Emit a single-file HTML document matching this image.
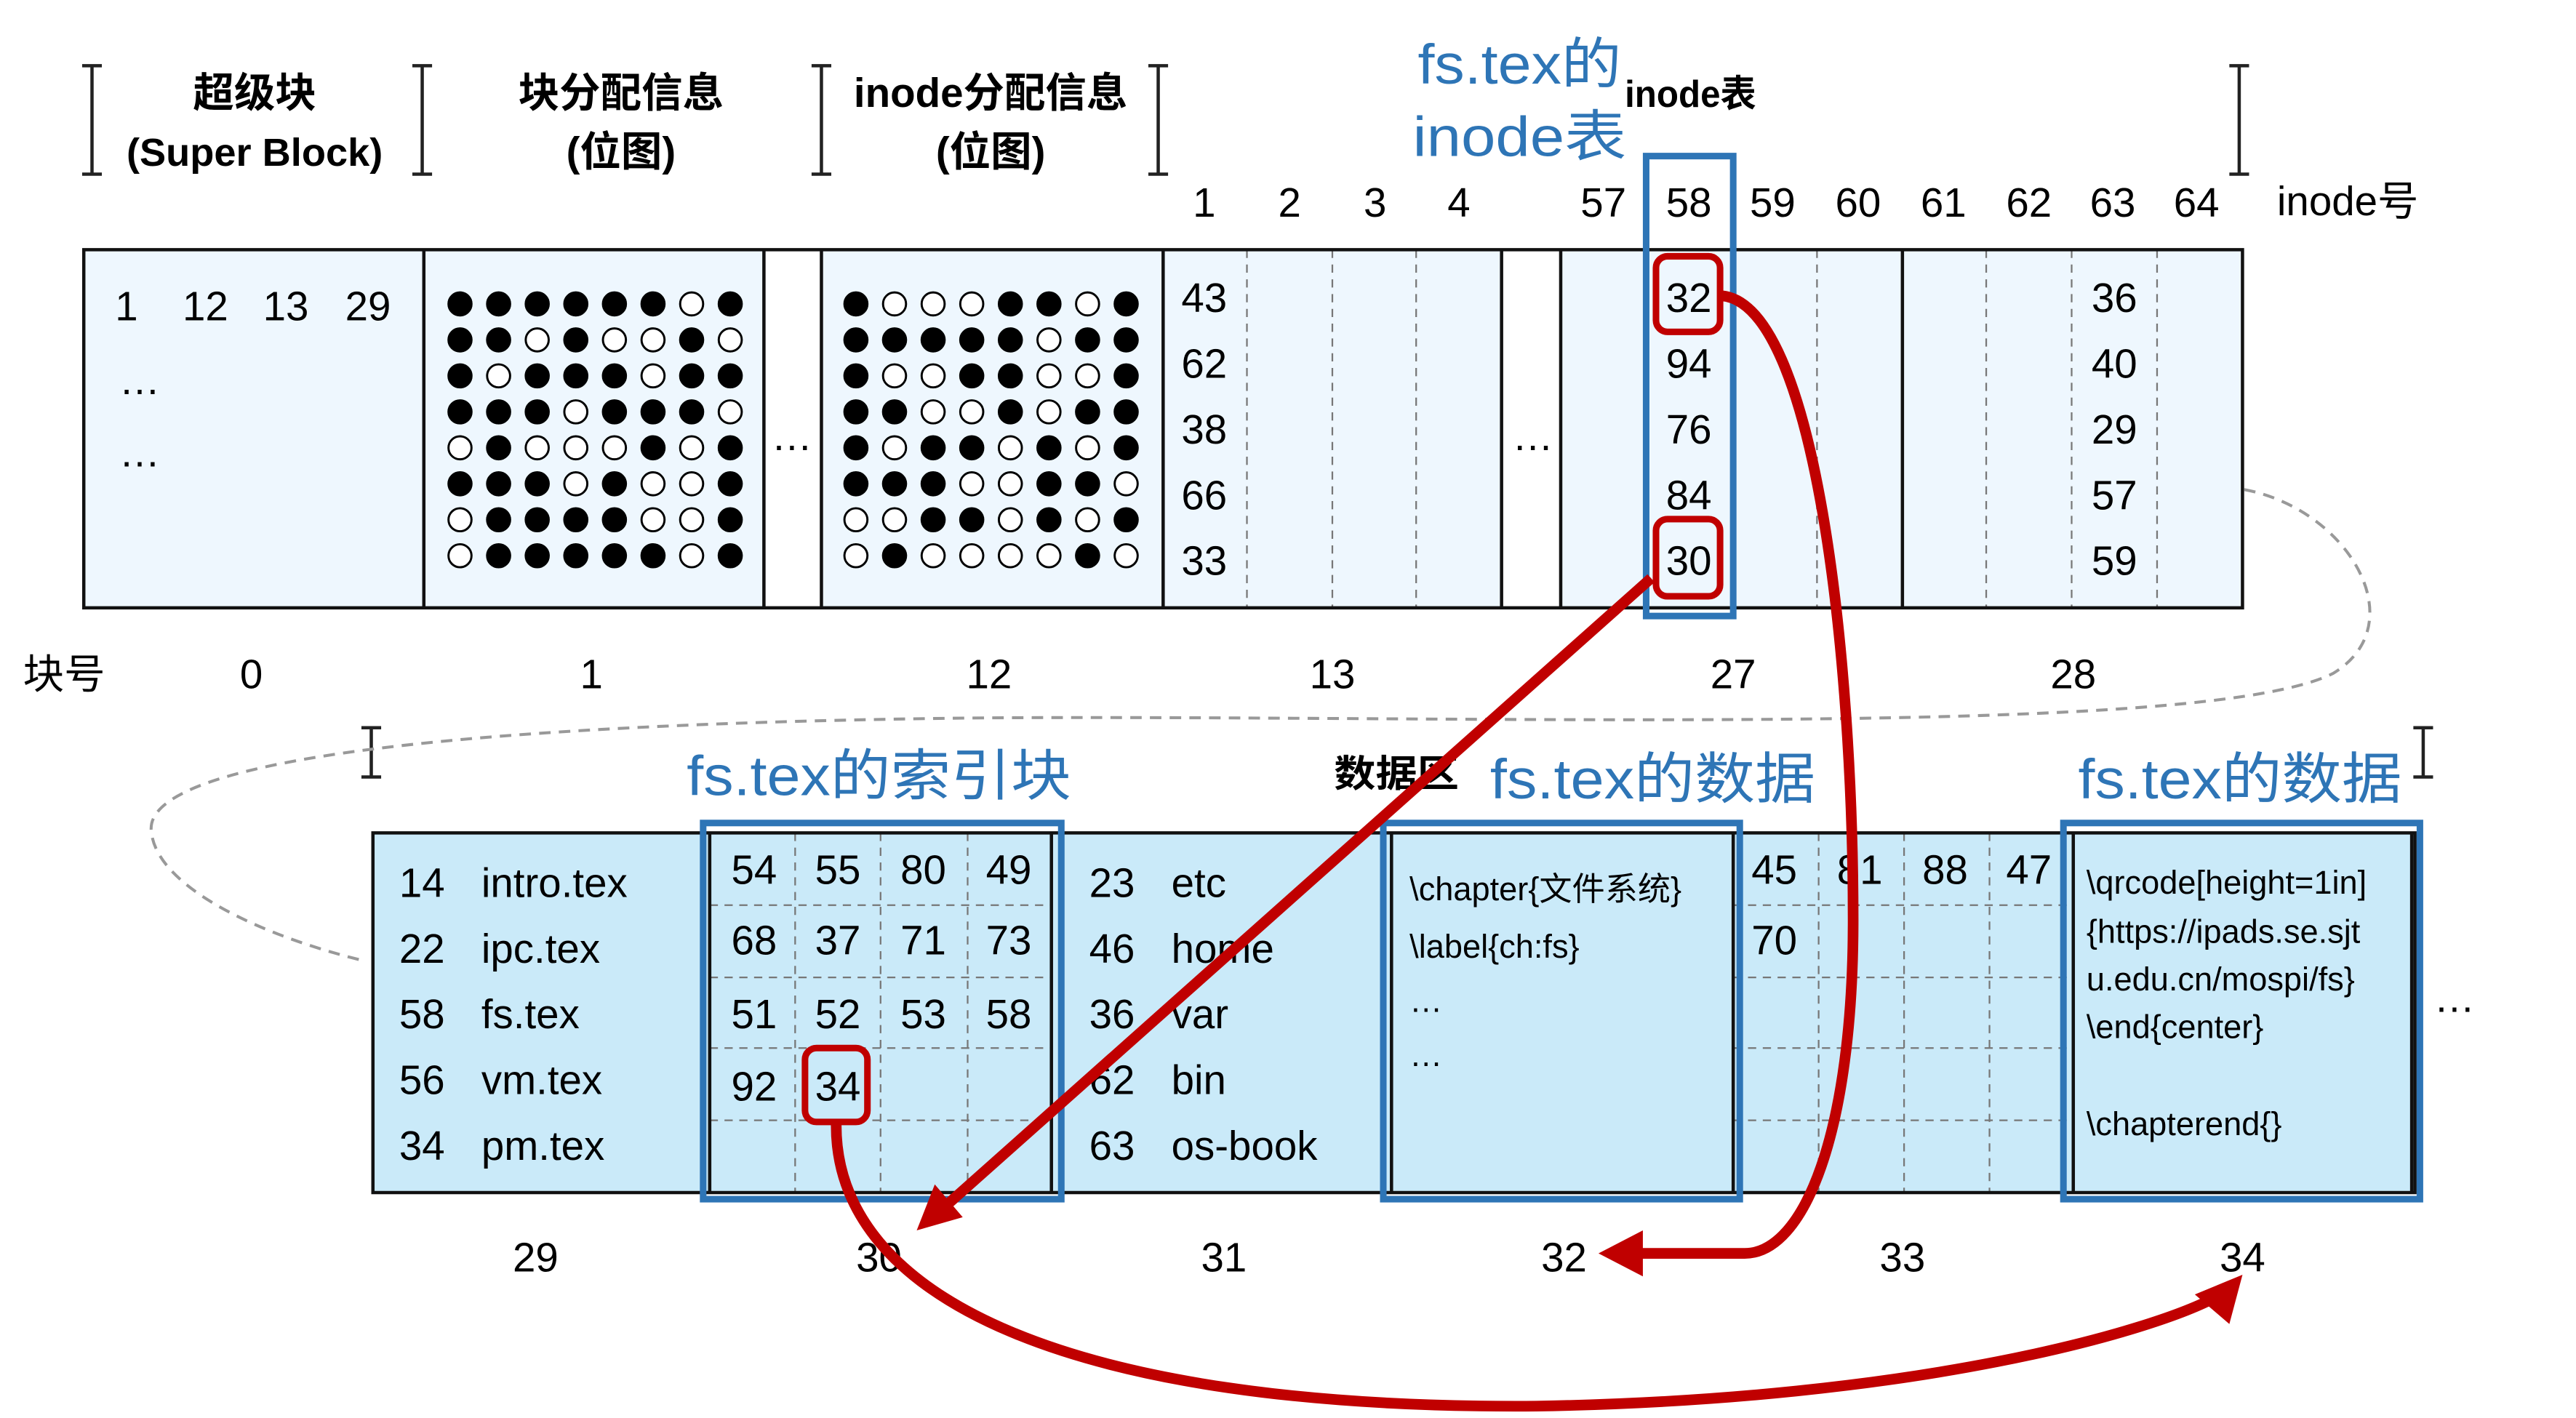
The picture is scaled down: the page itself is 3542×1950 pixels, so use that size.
<!DOCTYPE html>
<html><head><meta charset="utf-8"><style>html,body{margin:0;padding:0;background:#fff}svg{display:block}
text{font-family:"Liberation Sans","Noto Sans CJK SC",sans-serif;fill:#000}
.n{font-size:25px;text-anchor:middle}
.l{font-size:25px}
.b{font-weight:bold;font-size:25px;text-anchor:middle}
.bl{fill:#2e75b6;font-size:34px}
.s{font-size:20px}
</style></head><body>
<svg width="3542" height="1950" viewBox="0 0 1568 863.2" xmlns="http://www.w3.org/2000/svg">
<rect width="1568" height="864" fill="#fff"/>
<g stroke="#222" stroke-width="2" fill="none">
<path d="M50,40h12M56,40v66M50,106h12"/>
<path d="M251,40h12M257,40v66M251,106h12"/>
<path d="M494,40h12M500,40v66M494,106h12"/>
<path d="M699,40h12M705,40v66M699,106h12"/>
<path d="M1357,40h12M1363,40v66M1357,106h12"/>
<path d="M220,443h12M226,443v30M220,473h12"/>
<path d="M1469,443h12M1475,443v30M1469,473h12"/>
</g>
<text class="b" x="155" y="65">超级块</text>
<text class="n" x="155" y="101" style="font-weight:bold;font-size:24px">(Super Block)</text>
<text class="b" x="378" y="65">块分配信息</text>
<text class="b" x="378" y="101">(位图)</text>
<text class="b" x="603" y="65">inode分配信息</text>
<text class="b" x="603" y="101">(位图)</text>
<text class="bl" x="863" y="51" textLength="124" lengthAdjust="spacingAndGlyphs">fs.tex的</text>
<text class="bl" x="860" y="95" textLength="130" lengthAdjust="spacingAndGlyphs">inode表</text>
<text x="989" y="65" style="font-weight:bold;font-size:23px" textLength="80" lengthAdjust="spacingAndGlyphs">inode表</text>
<g>
<text class="n" x="733" y="132">1</text><text class="n" x="785" y="132">2</text><text class="n" x="837" y="132">3</text><text class="n" x="888" y="132">4</text>
<text class="n" x="976" y="132">57</text><text class="n" x="1028" y="132">58</text><text class="n" x="1079" y="132">59</text><text class="n" x="1131" y="132">60</text>
<text class="n" x="1183" y="132">61</text><text class="n" x="1235" y="132">62</text><text class="n" x="1286" y="132">63</text><text class="n" x="1337" y="132">64</text>
</g>
<text class="l" x="1386" y="131">inode号</text>
<rect x="51" y="152" width="1314" height="218" fill="#eef7fe"/>
<rect x="465" y="152" width="35" height="218" fill="#fff"/>
<rect x="914" y="152" width="36" height="218" fill="#fff"/>
<g stroke="#777" stroke-width="1" stroke-dasharray="5,4">
<path d="M759,152v218M811,152v218M862,152v218M1003,152v218M1106,152v218M1209,152v218M1261,152v218M1313,152v218"/>
</g>
<g stroke="#111" stroke-width="2" fill="none">
<path d="M51,152H1365V370H51Z"/>
<path d="M258,152v218M465,152v218M500,152v218M708,152v218M914,152v218M950,152v218M1158,152v218"/>
</g>
<text class="n" x="77" y="195">1</text><text class="n" x="125" y="195">12</text><text class="n" x="174" y="195">13</text><text class="n" x="224" y="195">29</text>
<text class="n" x="85" y="240">…</text><text class="n" x="85" y="284">…</text>
<text class="n" x="482" y="274">…</text><text class="n" x="933" y="274">…</text>
<g>
<text class="n" x="733" y="190">43</text><text class="n" x="733" y="230">62</text><text class="n" x="733" y="270">38</text><text class="n" x="733" y="310">66</text><text class="n" x="733" y="350">33</text>
<text class="n" x="1028" y="190">32</text><text class="n" x="1028" y="230">94</text><text class="n" x="1028" y="270">76</text><text class="n" x="1028" y="310">84</text><text class="n" x="1028" y="350">30</text>
<text class="n" x="1287" y="190">36</text><text class="n" x="1287" y="230">40</text><text class="n" x="1287" y="270">29</text><text class="n" x="1287" y="310">57</text><text class="n" x="1287" y="350">59</text>
</g>
<g stroke="#000" stroke-width="1.3">
<g transform="translate(280,185)">
<g fill="#000"><circle cx="0" r="7"/><circle cx="23.5" r="7"/><circle cx="47" r="7"/><circle cx="70.5" r="7"/><circle cx="94" r="7"/><circle cx="117.5" r="7"/><circle cx="141" r="7" fill="#fff"/><circle cx="164.5" r="7"/></g>
<g fill="#000" transform="translate(0,21.9)"><circle cx="0" r="7"/><circle cx="23.5" r="7"/><circle cx="47" r="7" fill="#fff"/><circle cx="70.5" r="7"/><circle cx="94" r="7" fill="#fff"/><circle cx="117.5" r="7" fill="#fff"/><circle cx="141" r="7"/><circle cx="164.5" r="7" fill="#fff"/></g>
<g fill="#000" transform="translate(0,43.8)"><circle cx="0" r="7"/><circle cx="23.5" r="7" fill="#fff"/><circle cx="47" r="7"/><circle cx="70.5" r="7"/><circle cx="94" r="7"/><circle cx="117.5" r="7" fill="#fff"/><circle cx="141" r="7"/><circle cx="164.5" r="7"/></g>
<g fill="#000" transform="translate(0,65.7)"><circle cx="0" r="7"/><circle cx="23.5" r="7"/><circle cx="47" r="7"/><circle cx="70.5" r="7" fill="#fff"/><circle cx="94" r="7"/><circle cx="117.5" r="7"/><circle cx="141" r="7"/><circle cx="164.5" r="7" fill="#fff"/></g>
<g fill="#000" transform="translate(0,87.6)"><circle cx="0" r="7" fill="#fff"/><circle cx="23.5" r="7"/><circle cx="47" r="7" fill="#fff"/><circle cx="70.5" r="7" fill="#fff"/><circle cx="94" r="7" fill="#fff"/><circle cx="117.5" r="7"/><circle cx="141" r="7" fill="#fff"/><circle cx="164.5" r="7"/></g>
<g fill="#000" transform="translate(0,109.5)"><circle cx="0" r="7"/><circle cx="23.5" r="7"/><circle cx="47" r="7"/><circle cx="70.5" r="7" fill="#fff"/><circle cx="94" r="7"/><circle cx="117.5" r="7" fill="#fff"/><circle cx="141" r="7" fill="#fff"/><circle cx="164.5" r="7"/></g>
<g fill="#000" transform="translate(0,131.4)"><circle cx="0" r="7" fill="#fff"/><circle cx="23.5" r="7"/><circle cx="47" r="7"/><circle cx="70.5" r="7"/><circle cx="94" r="7"/><circle cx="117.5" r="7" fill="#fff"/><circle cx="141" r="7" fill="#fff"/><circle cx="164.5" r="7"/></g>
<g fill="#000" transform="translate(0,153.3)"><circle cx="0" r="7" fill="#fff"/><circle cx="23.5" r="7"/><circle cx="47" r="7"/><circle cx="70.5" r="7"/><circle cx="94" r="7"/><circle cx="117.5" r="7"/><circle cx="141" r="7" fill="#fff"/><circle cx="164.5" r="7"/></g>
</g>
<g transform="translate(521,185)">
<g fill="#000"><circle cx="0" r="7"/><circle cx="23.5" r="7" fill="#fff"/><circle cx="47" r="7" fill="#fff"/><circle cx="70.5" r="7" fill="#fff"/><circle cx="94" r="7"/><circle cx="117.5" r="7"/><circle cx="141" r="7" fill="#fff"/><circle cx="164.5" r="7"/></g>
<g fill="#000" transform="translate(0,21.9)"><circle cx="0" r="7"/><circle cx="23.5" r="7"/><circle cx="47" r="7"/><circle cx="70.5" r="7"/><circle cx="94" r="7"/><circle cx="117.5" r="7" fill="#fff"/><circle cx="141" r="7"/><circle cx="164.5" r="7"/></g>
<g fill="#000" transform="translate(0,43.8)"><circle cx="0" r="7"/><circle cx="23.5" r="7" fill="#fff"/><circle cx="47" r="7" fill="#fff"/><circle cx="70.5" r="7"/><circle cx="94" r="7"/><circle cx="117.5" r="7" fill="#fff"/><circle cx="141" r="7" fill="#fff"/><circle cx="164.5" r="7"/></g>
<g fill="#000" transform="translate(0,65.7)"><circle cx="0" r="7"/><circle cx="23.5" r="7"/><circle cx="47" r="7" fill="#fff"/><circle cx="70.5" r="7" fill="#fff"/><circle cx="94" r="7"/><circle cx="117.5" r="7" fill="#fff"/><circle cx="141" r="7"/><circle cx="164.5" r="7"/></g>
<g fill="#000" transform="translate(0,87.6)"><circle cx="0" r="7"/><circle cx="23.5" r="7" fill="#fff"/><circle cx="47" r="7"/><circle cx="70.5" r="7"/><circle cx="94" r="7" fill="#fff"/><circle cx="117.5" r="7"/><circle cx="141" r="7" fill="#fff"/><circle cx="164.5" r="7"/></g>
<g fill="#000" transform="translate(0,109.5)"><circle cx="0" r="7"/><circle cx="23.5" r="7"/><circle cx="47" r="7"/><circle cx="70.5" r="7" fill="#fff"/><circle cx="94" r="7" fill="#fff"/><circle cx="117.5" r="7"/><circle cx="141" r="7"/><circle cx="164.5" r="7" fill="#fff"/></g>
<g fill="#000" transform="translate(0,131.4)"><circle cx="0" r="7" fill="#fff"/><circle cx="23.5" r="7" fill="#fff"/><circle cx="47" r="7"/><circle cx="70.5" r="7"/><circle cx="94" r="7" fill="#fff"/><circle cx="117.5" r="7"/><circle cx="141" r="7" fill="#fff"/><circle cx="164.5" r="7"/></g>
<g fill="#000" transform="translate(0,153.3)"><circle cx="0" r="7" fill="#fff"/><circle cx="23.5" r="7"/><circle cx="47" r="7" fill="#fff"/><circle cx="70.5" r="7" fill="#fff"/><circle cx="94" r="7" fill="#fff"/><circle cx="117.5" r="7" fill="#fff"/><circle cx="141" r="7"/><circle cx="164.5" r="7" fill="#fff"/></g>
</g>
</g>
<rect x="1002" y="95" width="53" height="280" fill="none" stroke="#2e75b6" stroke-width="4"/>
<rect x="1008" y="156" width="39" height="46" rx="7" fill="none" stroke="#c00000" stroke-width="4"/>
<rect x="1008" y="316" width="39" height="47" rx="7" fill="none" stroke="#c00000" stroke-width="4"/>
<text class="l" x="14" y="419">块号</text>
<text class="n" x="153" y="419">0</text><text class="n" x="360" y="419">1</text><text class="n" x="602" y="419">12</text><text class="n" x="811" y="419">13</text><text class="n" x="1055" y="419">27</text><text class="n" x="1262" y="419">28</text>
<path d="M1366,298 C1430,310 1470,380 1420,410 C1340,450 900,435 600,437 C300,440 90,460 92,505 C94,540 160,570 222,585" fill="none" stroke="#999" stroke-width="1.8" stroke-dasharray="7,5"/>
<text class="bl" x="418" y="484" textLength="234" lengthAdjust="spacingAndGlyphs">fs.tex的索引块</text>
<text x="812" y="479" style="font-weight:bold;font-size:23px" textLength="76" lengthAdjust="spacingAndGlyphs">数据区</text>
<text class="bl" x="907" y="486" textLength="198" lengthAdjust="spacingAndGlyphs">fs.tex的数据</text>
<text class="bl" x="1265" y="486" textLength="197" lengthAdjust="spacingAndGlyphs">fs.tex的数据</text>
<rect x="227" y="507" width="1243" height="219" fill="#caeaf9"/>
<g stroke="#777" stroke-width="1" stroke-dasharray="5,4">
<path d="M484,507v219M536,507v219M589,507v219M1107,507v219M1159,507v219M1211,507v219"/>
<path d="M432,551h208M432,595h208M432,638h208M432,682h208M1055,551h207M1055,595h207M1055,638h207M1055,682h207"/>
</g>
<g stroke="#111" stroke-width="2" fill="none">
<path d="M227,507H1470V726H227Z"/>
<path d="M432,507v219M640,507v219M847,507v219M1055,507v219M1262,507v219M1468,507v219"/>
</g>
<g fill="none" stroke="#2e75b6" stroke-width="4">
<rect x="428" y="501" width="218" height="229"/>
<rect x="842" y="501" width="217" height="229"/>
<rect x="1256" y="501" width="217" height="229"/>
</g>
<g>
<text class="l" x="243" y="546">14</text><text class="l" x="293" y="546">intro.tex</text>
<text class="l" x="243" y="586">22</text><text class="l" x="293" y="586">ipc.tex</text>
<text class="l" x="243" y="626">58</text><text class="l" x="293" y="626">fs.tex</text>
<text class="l" x="243" y="666">56</text><text class="l" x="293" y="666">vm.tex</text>
<text class="l" x="243" y="706">34</text><text class="l" x="293" y="706">pm.tex</text>
<text class="l" x="663" y="546">23</text><text class="l" x="713" y="546">etc</text>
<text class="l" x="663" y="586">46</text><text class="l" x="713" y="586">home</text>
<text class="l" x="663" y="626">36</text><text class="l" x="713" y="626">var</text>
<text class="l" x="663" y="666">62</text><text class="l" x="713" y="666">bin</text>
<text class="l" x="663" y="706">63</text><text class="l" x="713" y="706">os-book</text>
</g>
<g>
<text class="n" x="459" y="538">54</text><text class="n" x="510" y="538">55</text><text class="n" x="562" y="538">80</text><text class="n" x="614" y="538">49</text>
<text class="n" x="459" y="581">68</text><text class="n" x="510" y="581">37</text><text class="n" x="562" y="581">71</text><text class="n" x="614" y="581">73</text>
<text class="n" x="459" y="626">51</text><text class="n" x="510" y="626">52</text><text class="n" x="562" y="626">53</text><text class="n" x="614" y="626">58</text>
<text class="n" x="459" y="670">92</text><text class="n" x="510" y="670">34</text>
<text class="n" x="1080" y="538">45</text><text class="n" x="1132" y="538">81</text><text class="n" x="1184" y="538">88</text><text class="n" x="1235" y="538">47</text>
<text class="n" x="1080" y="581">70</text>
</g>
<text class="s" x="858" y="548">\chapter{文件系统}</text>
<text class="s" x="858" y="583">\label{ch:fs}</text>
<text class="s" x="858" y="616">…</text>
<text class="s" x="858" y="649">…</text>
<text class="s" x="1270" y="544">\qrcode[height=1in]</text>
<text class="s" x="1270" y="574">{https://ipads.se.sjt</text>
<text class="s" x="1270" y="603">u.edu.cn/mospi/fs}</text>
<text class="s" x="1270" y="632">\end{center}</text>
<text class="s" x="1270" y="691">\chapterend{}</text>
<text class="n" x="1494" y="616">…</text>
<rect x="490" y="638" width="38" height="45" rx="7" fill="none" stroke="#c00000" stroke-width="4"/>
<text class="n" x="326" y="774">29</text><text class="n" x="535" y="774">30</text><text class="n" x="745" y="774">31</text><text class="n" x="952" y="774">32</text><text class="n" x="1158" y="774">33</text><text class="n" x="1365" y="774">34</text>
<g fill="none" stroke="#c00000" stroke-width="6.5">
<path d="M1005,352 L578,732"/>
<path d="M1048,180 C1105,185 1128,400 1128,560 C1128,690 1098,763 1062,763 L998,763"/>
<path d="M509,684 C508,790 650,858 935,856 C1170,852 1310,810 1348,790"/>
</g>
<g fill="#c00000">
<polygon points="558,749 569,721 586,741"/>
<polygon points="973,763 1000,749 1000,777"/>
<polygon points="1365,776 1336,788 1357,806"/>
</g>
</svg>
</body></html>
